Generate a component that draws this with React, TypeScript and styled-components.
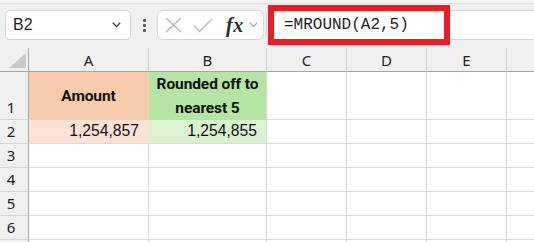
import React from "react";
import styled, { createGlobalStyle } from "styled-components";

const GlobalStyle = createGlobalStyle`
  html, body { margin: 0; padding: 0; }
  body {
    background: #f0f0f0;
    font-family: "Liberation Sans", Arial, sans-serif;
    overflow: hidden;
  }
`;

const Page = styled.div`
  width: 534px;
  height: 242px;
  display: flex;
  flex-direction: column;
  overflow: hidden;
  background: #f0f0f0;
  & > * { flex-shrink: 0; }
`;

const TopStrip = styled.div`
  height: 3px;
  background: #f6f6f6;
  border-bottom: 1px solid #dcdcdc;
`;

const FormulaBar = styled.div`
  height: 44px;
  display: flex;
  align-items: flex-start;
  padding: 6px 0 0 5px;
  box-sizing: border-box;
`;

const NameBox = styled.div`
  width: 126px;
  height: 30px;
  flex-shrink: 0;
  box-sizing: border-box;
  background: #ffffff;
  border: 1px solid #d3d3d3;
  border-radius: 5px;
  display: flex;
  align-items: center;
  justify-content: space-between;
  padding: 0 9px 0 7px;
`;

const NameText = styled.span`
  font-family: "Liberation Sans", Arial, sans-serif;
  font-size: 16px;
  color: #1f1f1f;
  line-height: 20px;
`;

const Dots = styled.div`
  width: 26px;
  height: 30px;
  flex-shrink: 0;
  display: flex;
  flex-direction: column;
  align-items: center;
  justify-content: center;
  gap: 2px;
`;

const Dot = styled.span`
  width: 3px;
  height: 3px;
  background: #5a5a5a;
  border-radius: 1px;
`;

const FxBox = styled.div`
  width: 107px;
  height: 30px;
  flex-shrink: 0;
  box-sizing: border-box;
  background: #ffffff;
  border: 1px solid #d8d8d8;
  border-radius: 6px;
  display: flex;
  align-items: center;
  padding: 0 0 0 7px;
`;

const IconSlot = styled.span<{ $w: number; $ml?: number }>`
  width: ${(p) => p.$w}px;
  margin-left: ${(p) => p.$ml ?? 0}px;
  display: flex;
  align-items: center;
  justify-content: center;
`;

const FxText = styled.span`
  font-family: "Liberation Serif", "Times New Roman", serif;
  font-style: italic;
  font-weight: 700;
  font-size: 20px;
  line-height: 24px;
  color: #2b2b2b;
  margin-left: 13px;
  letter-spacing: 0.5px;
`;

const FormulaInput = styled.div`
  position: relative;
  flex: 1;
  height: 30px;
  margin-left: 2px;
  box-sizing: border-box;
  background: #ffffff;
  border: 1px solid #d6d6d6;
  border-right: none;
  border-radius: 5px 0 0 5px;
  display: flex;
  align-items: center;
  padding-left: 17px;
`;

const FormulaText = styled.span`
  font-family: "Liberation Mono", "Courier New", monospace;
  font-size: 16px;
  line-height: 20px;
  color: #1e1e1e;
`;

const Highlight = styled.div`
  position: absolute;
  left: 1px;
  top: -6px;
  width: 182px;
  height: 40px;
  box-sizing: border-box;
  border: 6px solid #ed1c24;
  pointer-events: none;
`;

const Sheet = styled.div`
  display: grid;
  grid-template-columns: 29px 120px 118px 80px 80px 80px 80px;
  grid-template-rows: 24px 48px 24px 24px 24px 24px 24px 24px;
  background: #ffffff;
`;

const Corner = styled.div`
  background: #f0f0f0;
  border-right: 1px solid #a6a6a6;
  border-bottom: 1px solid #a6a6a6;
  box-sizing: border-box;
  display: flex;
  align-items: flex-end;
  justify-content: flex-end;
  padding: 0 2px 3px 0;
`;

const ColHeader = styled.div`
  background: #f0f0f0;
  box-sizing: border-box;
  border-right: 1px solid #cfcfcf;
  border-bottom: 1px solid #a6a6a6;
  display: flex;
  align-items: center;
  justify-content: center;
  font-family: "Noto Sans", "Liberation Sans", sans-serif;
  font-size: 15px;
  color: #222222;
  padding-top: 1px;
`;

const RowHeader = styled.div`
  background: #f0f0f0;
  box-sizing: border-box;
  border-right: 1px solid #a6a6a6;
  border-bottom: 1px solid #d4d4d4;
  display: flex;
  align-items: flex-end;
  justify-content: center;
  padding: 0 6px 1px 0;
  font-family: "Noto Sans", "Liberation Sans", sans-serif;
  font-size: 15px;
  line-height: 21px;
  color: #222222;
`;

const Cell = styled.div<{
  $fill?: string;
  $hideRight?: boolean;
  $hideBottom?: boolean;
  $align?: "left" | "center" | "right";
}>`
  box-sizing: border-box;
  background: ${(p) => p.$fill ?? "#ffffff"};
  border-right: 1px solid ${(p) => (p.$hideRight && p.$fill ? p.$fill : "#dadada")};
  border-bottom: 1px solid ${(p) => (p.$hideBottom && p.$fill ? p.$fill : "#dadada")};
  display: flex;
  align-items: center;
  justify-content: ${(p) =>
    p.$align === "right" ? "flex-end" : p.$align === "center" ? "center" : "flex-start"};
  text-align: ${(p) => p.$align ?? "left"};
  padding: ${(p) => (p.$align === "right" ? "0 9px 1px 0" : "0")};
  color: #111111;
  white-space: nowrap;
`;

const HeadText = styled.span`
  font-family: Roboto, "Liberation Sans", sans-serif;
  font-weight: 700;
  font-size: 15.5px;
  line-height: 24px;
  letter-spacing: -0.1px;
  padding-top: 1px;
`;

const NumberText = styled.span`
  font-family: "Liberation Sans", Arial, sans-serif;
  font-size: 15.7px;
  line-height: 20px;
`;

const Chevron = ({ color }: { color: string }) => (
  <svg width="9" height="6" viewBox="0 0 9 6" fill="none">
    <path d="M0.8 0.8 L4.5 4.6 L8.2 0.8" stroke={color} strokeWidth="1.3" />
  </svg>
);

const cols = ["A", "B", "C", "D", "E", "F"];
const headerLabels = ["A", "B", "C", "D", "E", ""];

export default function App() {
  const emptyRow = (n: number, label: string) => (
    <React.Fragment key={n}>
      <RowHeader>{label}</RowHeader>
      {cols.map((c) => (
        <Cell key={c} />
      ))}
    </React.Fragment>
  );

  return (
    <>
      <GlobalStyle />
      <Page>
        <TopStrip />
        <FormulaBar>
          <NameBox>
            <NameText>B2</NameText>
            <Chevron color="#333333" />
          </NameBox>
          <Dots>
            <Dot />
            <Dot />
            <Dot />
          </Dots>
          <FxBox>
            <IconSlot $w={17}>
              <svg width="17" height="16" viewBox="0 0 17 16" fill="none">
                <path d="M1 1 L16 15 M16 1 L1 15" stroke="#b3b3b3" strokeWidth="1.3" />
              </svg>
            </IconSlot>
            <IconSlot $w={20} $ml={11}>
              <svg width="20" height="15" viewBox="0 0 20 15" fill="none">
                <path d="M1 7.5 L6.5 13.5 L19 1" stroke="#b8b8b8" strokeWidth="1.3" />
              </svg>
            </IconSlot>
            <FxText>fx</FxText>
            <IconSlot $w={9} $ml={5}>
              <Chevron color="#a8a8a8" />
            </IconSlot>
          </FxBox>
          <FormulaInput>
            <FormulaText>=MROUND(A2,5)</FormulaText>
            <Highlight />
          </FormulaInput>
        </FormulaBar>
        <Sheet>
          <Corner>
            <svg width="17" height="15" viewBox="0 0 17 15">
              <path d="M17 0 L17 15 L0 15 Z" fill="#c9c9c9" />
            </svg>
          </Corner>
          {headerLabels.map((c, i) => (
            <ColHeader key={i}>{c}</ColHeader>
          ))}

          <RowHeader>1</RowHeader>
          <Cell $fill="#f8cbad" $hideRight $hideBottom $align="center">
            <HeadText>Amount</HeadText>
          </Cell>
          <Cell $fill="#b4e5a2" $hideBottom $align="center">
            <HeadText>
              Rounded off to
              <br />
              nearest 5
            </HeadText>
          </Cell>
          <Cell />
          <Cell />
          <Cell />
          <Cell />

          <RowHeader>2</RowHeader>
          <Cell $fill="#fbe2d5" $hideRight $align="right">
            <NumberText>1,254,857</NumberText>
          </Cell>
          <Cell $fill="#daf2d0" $align="right">
            <NumberText>1,254,855</NumberText>
          </Cell>
          <Cell />
          <Cell />
          <Cell />
          <Cell />

          {emptyRow(3, "3")}
          {emptyRow(4, "4")}
          {emptyRow(5, "5")}
          {emptyRow(6, "6")}
          {emptyRow(7, "")}
        </Sheet>
      </Page>
    </>
  );
}
